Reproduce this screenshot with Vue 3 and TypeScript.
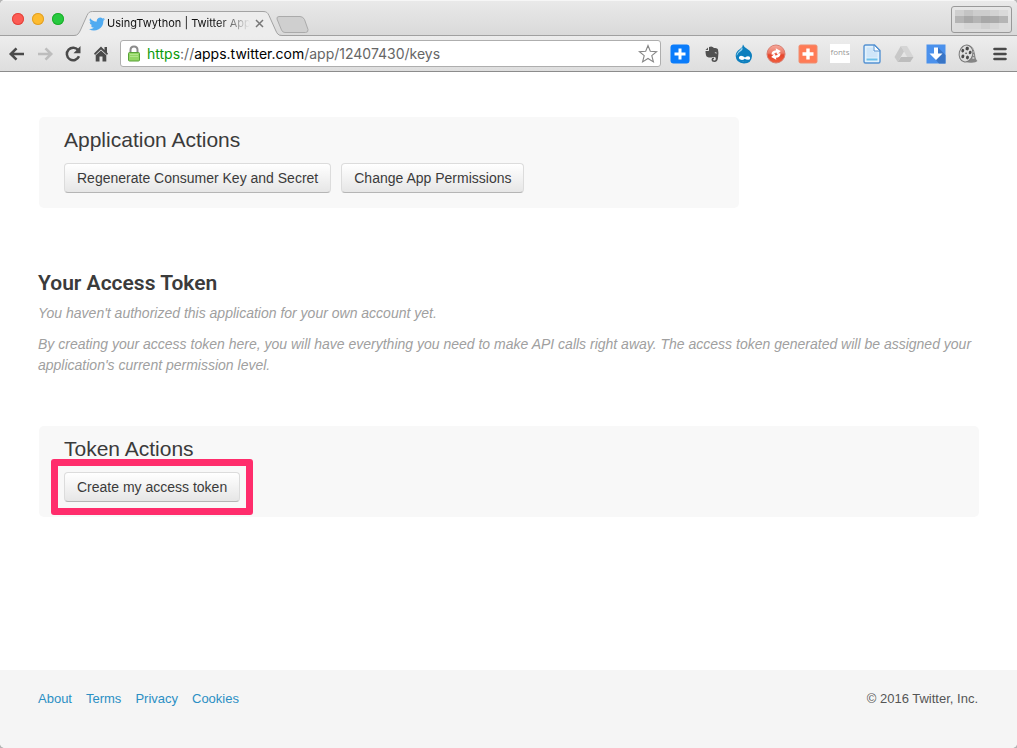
<script setup lang="ts">
interface FooterLink {
  label: string
  href: string
}

const footerLinks: FooterLink[] = [
  { label: 'About', href: '#about' },
  { label: 'Terms', href: '#terms' },
  { label: 'Privacy', href: '#privacy' },
  { label: 'Cookies', href: '#cookies' },
]

const appActions: string[] = ['Regenerate Consumer Key and Secret', 'Change App Permissions']

const avatarShades: string[][] = [
  ['#cfcfcf', '#c4c4c4', '#cdcdcd', '#cdcdcd', '#d3d3d3', '#dadada'],
  ['#b5b5b5', '#a9a9a9', '#b4b4b4', '#a8a8a8', '#ababab', '#b5b5b5'],
  ['#dcdcdc', '#d6d6d6', '#d6d6d6', '#cfcfcf', '#d6d6d6', '#dcdcdc'],
]
</script>

<template>
  <div class="window">
    <header class="chrome">
      <div class="tabstrip">
        <div class="lights">
          <button class="light close" aria-label="Close window"></button>
          <button class="light minimise" aria-label="Minimise window"></button>
          <button class="light maximise" aria-label="Zoom window"></button>
        </div>
        <div class="tab">
          <svg class="tab-shape" width="208" height="25" viewBox="0 0 208 25" aria-hidden="true">
            <path d="M0 24.500C4 24.500 5 22 6.500 19L13 4.500C14.500 1.500 15.500 .5 18.500 .5H189C192.500 .5 193.500 1.500 195 4.500L201.500 19C203 22.500 204 24.500 208 24.500V25H0Z" fill="#ededed" />
            <path d="M0 24.500C4 24.500 5 22 6.500 19L13 4.500C14.500 1.500 15.500 .5 18.500 .5H189C192.500 .5 193.500 1.500 195 4.500L201.500 19C203 22.500 204 24.500 208 24.500" fill="none" stroke="#a3a3a3" />
          </svg>
          <div class="tab-body">
            <svg width="16" height="16" viewBox="0 0 24 24" aria-hidden="true">
              <path fill="#50abf1" d="M24 4.600a10 10 0 0 1-2.800.8 4.900 4.900 0 0 0 2.100-2.700 10 10 0 0 1-3.100 1.200 4.900 4.900 0 0 0-8.400 4.500A14 14 0 0 1 1.700 3.200a4.900 4.900 0 0 0 1.500 6.500 4.900 4.900 0 0 1-2.200-.6 4.900 4.900 0 0 0 3.900 4.900 5 5 0 0 1-2.200.1 4.900 4.900 0 0 0 4.600 3.400A9.900 9.900 0 0 1 0 19.500 14 14 0 0 0 21.500 7.100 10 10 0 0 0 24 4.600z" />
            </svg>
            <span class="tab-title">UsingTwython | Twitter App</span>
            <button class="tab-close" aria-label="Close tab">
              <svg width="9" height="9" viewBox="0 0 9 9"><path d="M1 1L8 8M8 1L1 8" stroke="#777" stroke-width="1.500" /></svg>
            </button>
          </div>
        </div>
        <button class="new-tab" aria-label="New tab">
          <svg width="33" height="17" viewBox="0 0 33 17"><path d="M3 .5H24Q27 .5 28.500 3.500L32 13.500Q32.500 16.500 29.500 16.500H9Q6.500 16.500 5.500 14L1 3Q.5 .5 3 .5Z" fill="#cfcfcf" stroke="#aaa" /></svg>
        </button>
        <button class="profile" aria-label="Profile">
          <span v-for="(row, r) in avatarShades" :key="r" class="shade-row">
            <span v-for="(shade, c) in row" :key="c" class="shade" :style="{ background: shade }"></span>
          </span>
        </button>
      </div>

      <nav class="toolbar" aria-label="Browser">
        <div class="nav-buttons">
          <button class="nav-button" aria-label="Back">
            <svg width="18" height="18" viewBox="0 0 18 18"><path d="M8.500 3.300L2.800 9L8.500 14.700M3.500 9H16" fill="none" stroke="#4a4a4a" stroke-width="2.600" /></svg>
          </button>
          <button class="nav-button" aria-label="Forward">
            <svg width="18" height="18" viewBox="0 0 18 18"><path d="M9.500 3.300L15.200 9L9.500 14.700M14.500 9H2" fill="none" stroke="#bdbdbd" stroke-width="2.600" /></svg>
          </button>
          <button class="nav-button" aria-label="Reload">
            <svg width="18" height="18" viewBox="0 0 18 18"><path d="M14.300 5.300A6.300 6.300 0 1 0 15 11.300" fill="none" stroke="#4a4a4a" stroke-width="2.500" /><path d="M16.500 1V8.300H9.500Z" fill="#4a4a4a" /></svg>
          </button>
          <button class="nav-button" aria-label="Home">
            <svg width="18" height="18" viewBox="0 0 18 18"><path d="M9 1.500L2 8.500L3 10L9 4.500L15 10L16 8.500L15 7.500V2H12.500V5Z" fill="#4a4a4a" /><path d="M9 5.500L14.300 10.300V16.500H10.500V11.500H7.500V16.500H3.700V10.300Z" fill="#4a4a4a" /></svg>
          </button>
        </div>
        <div class="address">
          <svg width="12" height="17" viewBox="0 0 12 17" aria-hidden="true">
            <path d="M2.500 8V5Q2.500 1.500 6 1.500T9.500 5V8" fill="none" stroke="#8b8b8b" stroke-width="2" />
            <rect x=".5" y="7.500" width="11" height="8.500" rx="1" fill="#93d665" stroke="#58a238" />
            <path d="M2 9.500H10M2 11.500H10" stroke="#b2e58c" />
          </svg>
          <span class="url"><span class="scheme">https</span>://<span class="host">apps.twitter.com</span>/app/12407430/keys</span>
          <button class="star" aria-label="Bookmark this page">
            <svg width="20" height="20" viewBox="0 0 20 20"><path d="M10 1.500L12.300 7.300L18.600 7.700L13.800 11.700L15.400 17.900L10 14.500L4.600 17.900L6.200 11.700L1.400 7.700L7.700 7.300Z" fill="#fff" stroke="#858585" stroke-width="1.100" /></svg>
          </button>
        </div>
        <div class="extensions">
          <button class="extension" aria-label="Add to list">
            <svg width="20" height="20" viewBox="0 0 20 20"><rect x=".5" y=".5" width="19" height="19" rx="3" fill="#0a7cfb" /><path d="M10 4.500V15.500M4.500 10H15.500" stroke="#fff" stroke-width="3" /></svg>
          </button>
          <button class="extension" aria-label="Web clipper">
            <svg width="18" height="18" viewBox="0 0 18 18">
              <path d="M6 2Q9 .5 11 3Q14.500 2.500 15 4.500Q16 8 15 13Q14.500 17 11.500 17Q8.500 17 8.500 14.500Q8.500 12.500 11 12.500V14Q10 14 10 14.700Q10 15.500 11.500 15.500Q13 15.500 12.800 13Q12.500 11.500 10 12Q7 13 4.500 12Q2.500 11.500 2.500 6H5.500Q6 6 6 5Z" fill="#515151" />
              <path d="M2.500 5L5 2.500V5Z" fill="#555" /><path d="M11.500 8Q13 6.500 14 8.500Q12.500 8 11.500 8" fill="#eee" />
            </svg>
          </button>
          <button class="extension" aria-label="Drupal">
            <svg width="20" height="20" viewBox="0 0 20 20">
              <path d="M9 .5Q10 3.500 14 5.500Q18 8 18 12Q17.500 19.500 10 19.500Q2 19 1.700 12Q1.500 8 6 5Q9 3 9 .5Z" fill="#0d7fbe" />
              <path d="M8 3Q7.500 5.500 4.500 7.500Q2.500 9.500 2.700 12Q4 8.500 7 7Q9.500 5.500 8 3Z" fill="#9bd5ee" />
              <path d="M7 11.700Q9 11.700 11 13.400Q14 11.200 15.700 12.800Q17 15.700 14.300 15.800Q12 15.700 10.700 14.700Q9 16.300 7 15.800Q4.600 15.300 4.900 13.300Q5.400 11.700 7 11.700ZM7.500 17.200Q10.500 18.700 13 17Q11 19 7.500 17.200Z" fill="#fff" />
            </svg>
          </button>
          <button class="extension" aria-label="Redirect">
            <svg width="20" height="20" viewBox="0 0 20 20">
              <defs>
                <linearGradient id="redirect-fill" x1="0" y1="0" x2="0" y2="1">
                  <stop offset="0" stop-color="#f6a99c" />
                  <stop offset=".45" stop-color="#ec7a66" />
                  <stop offset=".55" stop-color="#e6452c" />
                  <stop offset="1" stop-color="#f0603f" />
                </linearGradient>
              </defs>
              <circle cx="10" cy="10" r="9" fill="url(#redirect-fill)" stroke="#d87d70" />
              <path d="M5.500 10.500Q5.500 6.500 10 6.200L9.700 4.300L14.800 7L11 10.500L10.700 8.600Q8.500 8.500 7.500 10.800ZM14.500 9.500Q14.500 13.500 10 13.800L10.300 15.700L5.200 13L9 9.500L9.300 11.400Q11.500 11.500 12.500 9.200Z" fill="#fff" />
            </svg>
          </button>
          <button class="extension" aria-label="Add bookmark">
            <svg width="20" height="20" viewBox="0 0 20 20"><rect x="1" y="1" width="18" height="18" rx="1.500" fill="#ff7b56" stroke="#ef8e71" /><path d="M10 4.500V15.500M4.500 10H15.500" stroke="#fff" stroke-width="3.400" /></svg>
          </button>
          <button class="extension"><span class="fonts-icon">fonts</span></button>
          <button class="extension" aria-label="Document">
            <svg width="20" height="20" viewBox="0 0 20 20">
              <path d="M3.500 1H12.500L18 6.500V17.500Q18 19 16.500 19H3.500Q2 19 2 17.500V2.500Q2 1 3.500 1Z" fill="#e3f2fc" stroke="#5592d2" stroke-width="1.400" />
              <path d="M4.500 3.500H11V8H15.500V13.500H4.500Z" fill="#cfe6f9" />
              <path d="M12 1V7H18Z" fill="#fff" stroke="#5592d2" /><path d="M4.500 15.500H15.500" stroke="#6cc0ea" stroke-width="2" />
            </svg>
          </button>
          <button class="extension" aria-label="Drive">
            <svg width="20" height="18" viewBox="0 0 20 18"><path d="M6.800 1H13L19.500 12H13.200Z" fill="#d5d5d5" /><path d="M6.800 1L.5 12L3.700 17L10 6.500Z" fill="#c8c8c8" /><path d="M7 12H19.500L16.300 17H3.700Z" fill="#bdbdbd" /></svg>
          </button>
          <button class="extension" aria-label="Downloads">
            <svg width="20" height="20" viewBox="0 0 20 20"><path d="M.5 .5H19.500V19.500H.5Z" fill="#4b91ec" /><path d="M12 3.500L19.500 11V19.500H13L10 16Z" fill="#3975c6" /><path d="M8 3.500H12V9.500H16.500L10 16L3.500 9.500H8Z" fill="#fff" /></svg>
          </button>
          <button class="extension" aria-label="Video">
            <svg width="20" height="20" viewBox="0 0 20 20">
              <path d="M10 1Q16 2 17 10Q17.500 15.500 19.500 17Q17.500 19.500 10 18.500L7 17Z" fill="#858585" /><path d="M14.500 4L15.500 16" stroke="#c5c5c5" stroke-width="2" stroke-dasharray="2 1" />
              <ellipse cx="8" cy="9.500" rx="6.800" ry="8.500" transform="rotate(14 8 9.500)" fill="#dedede" stroke="#777" />
              <g fill="#4a4a4a" transform="rotate(14 8 9.500)"><ellipse cx="8" cy="4.400" rx="1.700" ry="1.800" /><ellipse cx="4.200" cy="7.500" rx="1.400" ry="1.800" /><ellipse cx="11.800" cy="7.500" rx="1.400" ry="1.800" /><ellipse cx="5.600" cy="13" rx="1.500" ry="1.900" /><ellipse cx="10.400" cy="13" rx="1.500" ry="1.900" /><circle cx="8" cy="9.300" r=".8" /></g>
            </svg>
          </button>
          <button class="extension" aria-label="Menu">
            <svg width="14" height="14" viewBox="0 0 14 14"><path d="M1.500 2H12.500M1.500 7H12.500M1.500 12H12.500" stroke="#4a4a4a" stroke-width="2.600" stroke-linecap="round" /></svg>
          </button>
        </div>
      </nav>
    </header>

    <main class="content">
      <section class="panel app-actions">
        <h3>Application Actions</h3>
        <div class="actions">
          <button v-for="action in appActions" :key="action" class="btn">{{ action }}</button>
        </div>
      </section>

      <section class="token">
        <h2>Your Access Token</h2>
        <p>You haven't authorized this application for your own account yet.</p>
        <p>By creating your access token here, you will have everything you need to make API calls right away. The access token generated will be assigned your application's current permission level.</p>
      </section>

      <section class="panel">
        <h3>Token Actions</h3>
        <div class="actions">
          <div class="highlight"><button class="btn">Create my access token</button></div>
        </div>
      </section>
    </main>

    <footer class="footer">
      <nav class="links" aria-label="Footer">
        <a v-for="link in footerLinks" :key="link.label" :href="link.href">{{ link.label }}</a>
      </nav>
      <span>© 2016 Twitter, Inc.</span>
    </footer>
  </div>
</template>

<style>
body {
  background: #b5b5b5;
}
</style>

<style scoped>
.window {
  display: flex;
  flex-direction: column;
  min-height: 100vh;
  overflow: hidden;
  border-radius: 5px;
  background: #fff;
  color: #3b3b3b;
  font-family: "Liberation Sans", Arial, sans-serif;
  font-size: 14px;
  line-height: 21px;
}

button {
  margin: 0;
  padding: 0;
  border: 0;
  background: none;
  color: inherit;
  font: inherit;
}

svg {
  display: block;
  flex: none;
}

.chrome {
  font-family: Inter, sans-serif;
}

.tabstrip {
  display: flex;
  align-items: flex-end;
  height: 36px;
  box-sizing: border-box;
  padding-right: 5px;
  border-top: 1px solid #f6f6f6;
  background: linear-gradient(#e9e9e9, #d9d9d9);
  box-shadow: inset 0 -1px #a0a0a0;
}

.lights {
  display: flex;
  gap: 8px;
  padding: 0 10px 11px 12px;
}

.light {
  width: 12px;
  height: 12px;
  border-radius: 50%;
}

.close {
  background: #fc5b54;
  box-shadow: inset 0 0 0 1px #e2453d;
}

.minimise {
  background: #fdbb2f;
  box-shadow: inset 0 0 0 1px #e0a028;
}

.maximise {
  background: #27c93f;
  box-shadow: inset 0 0 0 1px #1dad2b;
}

.tab {
  display: grid;
  flex: none;
}

.tab-shape,
.tab-body {
  grid-area: 1 / 1;
}

.tab-body {
  display: flex;
  align-items: center;
  padding: 0 18px 0 15px;
}

.tab-title {
  flex: 1;
  width: 0;
  margin-left: 2px;
  color: #111;
  font-size: 11px;
  white-space: nowrap;
  mask-image: linear-gradient(to right, #000 78%, transparent);
}

.tab-close {
  padding: 2px 0 2px 5px;
}

.new-tab {
  padding-bottom: 3px;
  margin-left: -6px;
}

.profile {
  display: flex;
  flex-direction: column;
  width: 61px;
  height: 27px;
  margin: 0 0 3px auto;
  padding: 3px;
  box-sizing: border-box;
  border: 1px solid #999;
  border-radius: 3px;
}

.shade-row {
  display: flex;
  flex: 1;
}

.shade {
  flex: 1;
}

.toolbar {
  display: flex;
  align-items: center;
  height: 36px;
  box-sizing: border-box;
  padding: 0 1px 0 3px;
  border-bottom: 1px solid #8c8c8c;
  background: linear-gradient(#ededed, #dedede);
}

.nav-buttons,
.extensions {
  display: flex;
  flex: none;
}

.nav-button {
  display: grid;
  place-items: center;
  width: 28px;
  height: 28px;
}

.address {
  display: flex;
  flex: 1;
  align-items: center;
  height: 27px;
  min-width: 0;
  margin: 0 3px 0 5px;
  padding: 0 2px 0 7px;
  box-sizing: border-box;
  border: 1px solid #aeaeae;
  border-radius: 3px;
  background: #fff;
}

.url {
  flex: 1;
  min-width: 0;
  margin-left: 7px;
  overflow: hidden;
  color: #666;
  font-size: 14px;
  white-space: nowrap;
}

.scheme {
  color: #0b9a0b;
}

.host {
  color: #000;
}

.extension {
  display: grid;
  place-items: center;
  width: 32px;
  height: 28px;
}

.fonts-icon {
  width: 20px;
  height: 19px;
  background: #fff;
  color: #999;
  font-family: "Open Sans", sans-serif;
  font-size: 8px;
  line-height: 15px;
}

.content {
  flex: 1;
  padding: 45px 38px 0 39px;
}

.panel {
  padding: 12px 25px 15px;
  border-radius: 5px;
  background: #f8f8f8;
}

.app-actions {
  max-width: 650px;
}

h3 {
  margin: 0 0 12px;
  font-size: 21px;
  font-weight: 400;
  line-height: 22px;
}

.actions {
  display: flex;
  gap: 10px;
}

.btn {
  height: 30px;
  padding: 0 12px;
  border: 1px solid #dcdcdc;
  border-bottom-color: #b5b5b5;
  border-radius: 4px;
  background: linear-gradient(#fff, #e6e6e6);
  font-size: 14px;
  line-height: 20px;
}

.highlight {
  position: relative;
}

.highlight::after {
  position: absolute;
  inset: -13px;
  border: 7px solid #ff2d6c;
  border-radius: 3px;
  content: "";
  pointer-events: none;
}

.token {
  margin: 60px 0 50px -1px;
}

h2 {
  margin: 0 0 6px;
  padding-top: 1px;
  font-family: Roboto, sans-serif;
  font-size: 21px;
  font-weight: 600;
  line-height: 28px;
}

p {
  margin: 0 0 10px;
  color: #a0a0a0;
  font-style: italic;
}

.footer {
  display: flex;
  justify-content: space-between;
  height: 78px;
  padding: 18px 39px 0 38px;
  box-sizing: border-box;
  background: #f5f5f5;
  color: #555;
  font-size: 13px;
}

.links {
  display: flex;
  gap: 14px;
}

.links a {
  color: #2b8fc4;
  text-decoration: none;
}
</style>
